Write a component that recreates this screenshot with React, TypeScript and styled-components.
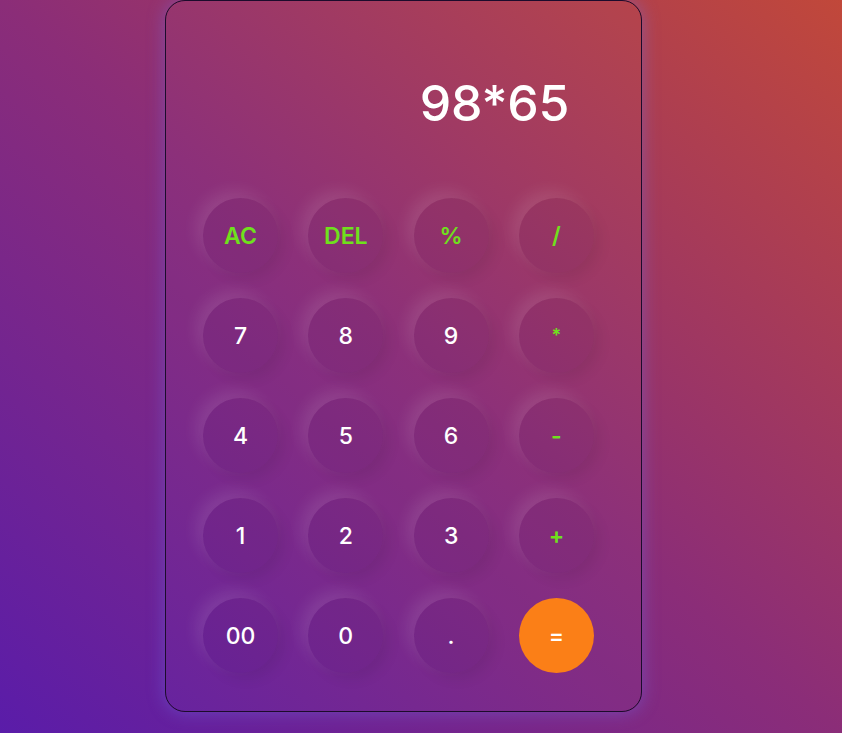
import { createGlobalStyle } from "styled-components"
import styled from "styled-components"

const GlobalStyle = createGlobalStyle`
  html, body {
    margin: 0;
    padding: 0;
    min-height: 100%;
  }

  body {
    font-family: Inter, "Open Sans", sans-serif;
    font-feature-settings: "calt" 0;
    background: linear-gradient(to top right, #5a1ca9 0%, #8b2d78 50%, #c1483a 100%);
    min-height: 733px;
  }
`

type Kind = "digit" | "op" | "equal"

type Key = Readonly<{
  label: string
  kind: Kind
  small?: boolean
}>

const keys: Key[] = [
  { label: "AC", kind: "op" },
  { label: "DEL", kind: "op" },
  { label: "%", kind: "op" },
  { label: "/", kind: "op" },
  { label: "7", kind: "digit" },
  { label: "8", kind: "digit" },
  { label: "9", kind: "digit" },
  { label: "*", kind: "op", small: true },
  { label: "4", kind: "digit" },
  { label: "5", kind: "digit" },
  { label: "6", kind: "digit" },
  { label: "-", kind: "op" },
  { label: "1", kind: "digit" },
  { label: "2", kind: "digit" },
  { label: "3", kind: "digit" },
  { label: "+", kind: "op" },
  { label: "00", kind: "digit" },
  { label: "0", kind: "digit" },
  { label: ".", kind: "digit" },
  { label: "=", kind: "equal" },
]

const Page = styled.div`
  min-height: 733px;
  padding-left: 165px;
  box-sizing: border-box;
`

const Card = styled.div`
  width: 477px;
  height: 712px;
  box-sizing: border-box;
  border: 1px solid #1c0b2c;
  border-radius: 20px;
  background: rgba(255, 255, 255, 0.015);
  box-shadow: 0 0 18px rgba(110, 110, 235, 0.45);
`

const Display = styled.div`
  height: 197px;
  box-sizing: border-box;
  padding: 77px 72px 0 0;
  text-align: right;
  color: #fff;
  font-size: 50px;
  line-height: 1;
  font-weight: 500;
  letter-spacing: -0.3px;
  font-feature-settings: "calt" 0;
`

const Keypad = styled.div`
  display: grid;
  grid-template-columns: repeat(4, 75px);
  column-gap: 30.3px;
  row-gap: 25px;
  padding-left: 37px;
`

const KeyButton = styled.button<{ $kind: Kind; $small?: boolean }>`
  width: 75px;
  height: 75px;
  border: none;
  border-radius: 50%;
  padding: 0;
  display: flex;
  align-items: center;
  justify-content: center;
  font-family: Inter, "Open Sans", sans-serif;
  font-feature-settings: "calt" 0;
  font-size: ${({ $small }) => ($small ? "18px" : "23px")};
  font-weight: ${({ $kind }) => ($kind === "op" ? 600 : 500)};
  color: ${({ $kind }) => ($kind === "op" ? "#6fe11c" : "#fff")};
  background: ${({ $kind }) =>
    $kind === "equal" ? "#fb7f17" : "rgba(40, 0, 60, 0.06)"};
  box-shadow: ${({ $kind }) =>
    $kind === "equal"
      ? "none"
      : "-7px -7px 16px rgba(255, 255, 255, 0.1), 6px 6px 14px rgba(0, 0, 0, 0.07)"};
  cursor: pointer;
`

const App = () => {
  return (
    <>
      <GlobalStyle />
      <Page>
        <Card>
          <Display>98*65</Display>
          <Keypad>
            {keys.map((key) => (
              <KeyButton key={key.label} $kind={key.kind} $small={key.small}>
                {key.label}
              </KeyButton>
            ))}
          </Keypad>
        </Card>
      </Page>
    </>
  )
}

export default App
